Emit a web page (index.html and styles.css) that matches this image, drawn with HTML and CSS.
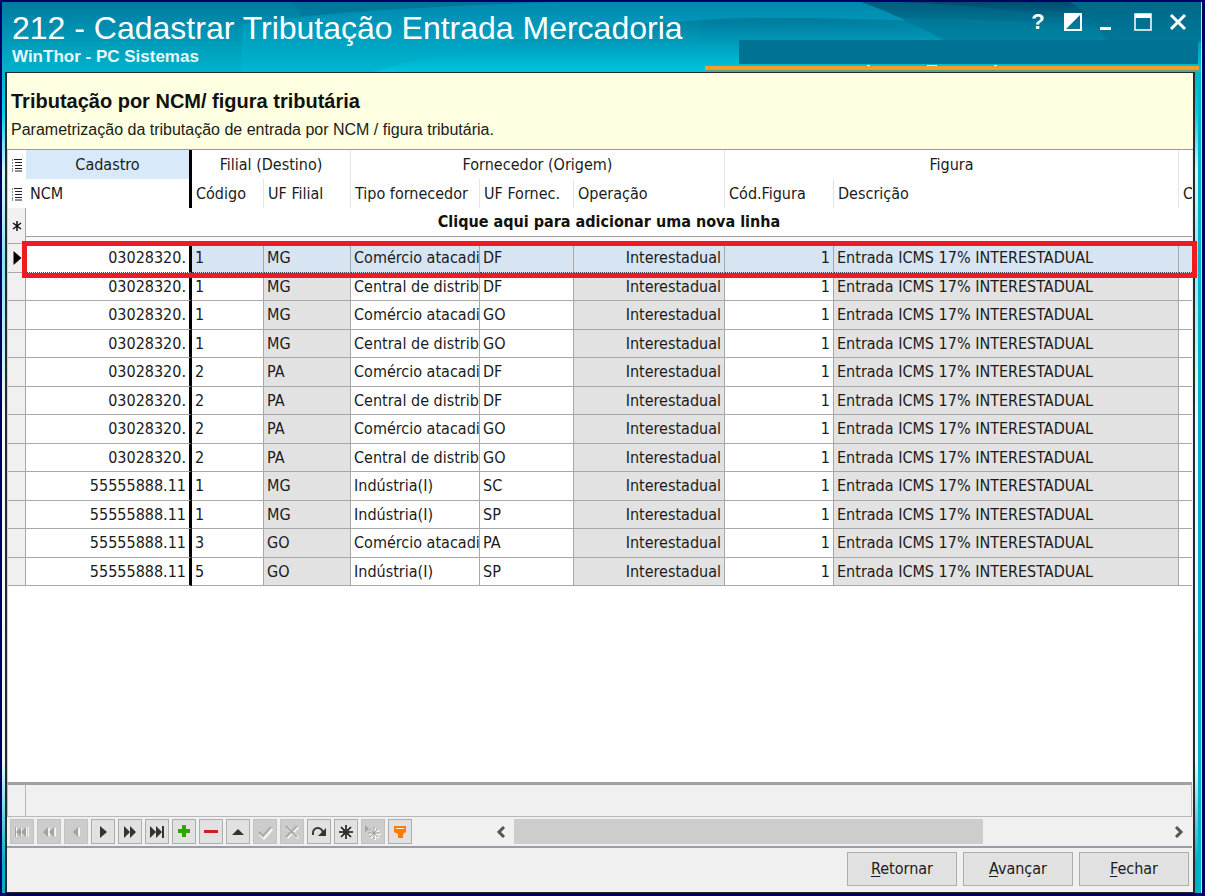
FILE: index.html
```html
<!DOCTYPE html>
<html lang="pt-BR">
<head>
<meta charset="utf-8">
<title>212 - Cadastrar Tributação Entrada Mercadoria</title>
<link rel="stylesheet" href="styles.css">
</head>
<body>
<main class="window">
  <header class="titlebar">
    <svg class="waves" viewBox="0 0 1200 70" preserveAspectRatio="none" aria-hidden="true">
      <defs>
        <linearGradient id="w1" x1="0" y1="0" x2="0" y2="1"><stop offset="0" stop-color="#007a9f"/><stop offset="1" stop-color="#00b3cc"/></linearGradient>
        <linearGradient id="w2" x1="0" y1="0" x2="0" y2="1"><stop offset="0" stop-color="#008fb5"/><stop offset="1" stop-color="#00b8d2"/></linearGradient>
        <linearGradient id="w3" x1="0" y1="0" x2="0" y2="1"><stop offset="0" stop-color="#007c9e"/><stop offset="1" stop-color="#00c4dd"/></linearGradient>
        <linearGradient id="w4" x1="0" y1="0" x2="0" y2="1"><stop offset="0" stop-color="#005d7c"/><stop offset="1" stop-color="#0088a8"/></linearGradient>
        <linearGradient id="w5" x1="0" y1="0" x2="0" y2="1"><stop offset="0" stop-color="#004c69"/><stop offset="1" stop-color="#007c9c"/></linearGradient>
        <linearGradient id="w6" x1="0" y1="0" x2="0" y2="1"><stop offset="0" stop-color="#007798"/><stop offset="1" stop-color="#0098bb"/></linearGradient>
      </defs>
      <rect width="1200" height="70" fill="url(#w1)"/>
      <path d="M240 22Q360 6 560 0H1200V70H240Z" fill="url(#w2)" opacity=".7"/>
      <path d="M290 0H560Q400 4 300 14Z" fill="#006b8d" opacity=".4"/>
      <path d="M370 70Q560 16 800 16Q960 18 1200 34V70Z" fill="url(#w3)"/>
      <path d="M790 16Q900 18 945 40H700V18Q740 15 790 16Z" fill="url(#w6)" opacity=".7"/>
      <path d="M860 0H1200V40H945Q905 16 860 0Z" fill="url(#w4)"/>
      <path d="M900 16Q1000 16 1100 26L1120 38H945Z" fill="#00809f" opacity=".5"/>
      <path d="M900 0H1070L1100 22Q1000 4 900 0Z" fill="url(#w5)"/>
      <path d="M1068 0H1200V40H1106Q1090 12 1068 0Z" fill="#00708f" opacity=".6"/>
    </svg>
    <div class="titles">
      <h1>212 - Cadastrar Tributação Entrada Mercadoria</h1>
      <p>WinThor - PC Sistemas</p>
    </div>
    <div class="title-side">
      <div class="controls">
        <button type="button" aria-label="Ajuda">?</button>
        <button type="button" aria-label="Alternar"><svg viewBox="0 0 18 18"><path d="M1 1h16v16H1z" fill="none" stroke="#fff" stroke-width="2"/><path d="M1 1h16L1 17z" fill="#fff"/></svg></button>
        <button type="button" aria-label="Minimizar"><svg viewBox="0 0 18 18"><path d="M1 14h11v3H1z" fill="#fff"/></svg></button>
        <button type="button" aria-label="Maximizar"><svg viewBox="0 0 18 18"><path d="M1 1h16v16H1z" fill="none" stroke="#fff" stroke-width="1.500"/><path d="M1 1h16v4H1z" fill="#fff"/></svg></button>
        <button type="button" aria-label="Fechar janela"><svg viewBox="0 0 18 18"><path d="M2 2l14 14M16 2L2 16" stroke="#fff" stroke-width="3"/></svg></button>
      </div>
      <div class="strip"></div>
      <div class="accent"><svg viewBox="0 0 494 2" preserveAspectRatio="none" aria-hidden="true"><path d="M162 0h3v1h-3zM222 0h10v1h-10zM289 0h3v1h-3z" fill="#e8f6f8"/></svg></div>
    </div>
  </header>

  <div class="client">
    <section class="intro">
      <h2>Tributação por NCM/ figura tributária</h2>
      <p>Parametrização da tributação de entrada por NCM / figura tributária.</p>
    </section>

    <section class="grid">
      <table>
        <colgroup><col class="c-ind"><col class="c-ncm"><col class="c-cod"><col class="c-uf"><col class="c-tipo"><col class="c-uff"><col class="c-op"><col class="c-fig"><col><col class="c-last"></colgroup>
        <thead>
          <tr class="bands">
            <th class="menu"><svg viewBox="0 0 10 14"><path d="M0 2h1M0 5h1M0 8h1M0 11h1M0 13h1" stroke="#222"/><path d="M2 1.500h8M3 4.500h7M3 7.500h7M3 10.500h7M3 13h7" stroke="#222"/></svg></th>
            <th class="hot frozen">Cadastro</th><th colspan="2">Filial (Destino)</th><th colspan="3">Fornecedor (Origem)</th><th colspan="2">Figura</th><th></th>
          </tr>
          <tr class="heads">
            <th class="menu"><svg viewBox="0 0 10 14"><path d="M0 2h1M0 5h1M0 8h1M0 11h1M0 13h1" stroke="#222"/><path d="M2 1.500h8M3 4.500h7M3 7.500h7M3 10.500h7M3 13h7" stroke="#222"/></svg></th>
            <th class="frozen">NCM</th><th>Código</th><th>UF Filial</th><th>Tipo fornecedor</th><th>UF Fornec.</th><th>Operação</th><th>Cód.Figura</th><th>Descrição</th><th>C</th>
          </tr>
        </thead>
        <tbody>
          <tr class="new"><th class="ind" rowspan="2"><svg viewBox="0 0 10 12"><path d="M5 1v10M1 3l8 6M9 3L1 9" stroke="#111" stroke-width="1.500"/></svg></th><td colspan="9">Clique aqui para adicionar uma nova linha</td></tr>
          <tr class="gap"><td colspan="9"></td></tr>
        </tbody>
        <tbody class="rows">
          <tr class="current"><th class="ind"><svg viewBox="0 0 8 14"><path d="M0 0l8 7-8 7z" fill="#000"/></svg></th><td class="num frozen">03028320.</td><td>1</td><td class="ro">MG</td><td>Comércio atacadi</td><td>DF</td><td class="ro num">Interestadual</td><td class="num">1</td><td class="ro">Entrada ICMS 17% INTERESTADUAL</td><td></td></tr>
          <tr><th class="ind"></th><td class="num frozen">03028320.</td><td>1</td><td class="ro">MG</td><td>Central de distrib</td><td>DF</td><td class="ro num">Interestadual</td><td class="num">1</td><td class="ro">Entrada ICMS 17% INTERESTADUAL</td><td></td></tr>
          <tr><th class="ind"></th><td class="num frozen">03028320.</td><td>1</td><td class="ro">MG</td><td>Comércio atacadi</td><td>GO</td><td class="ro num">Interestadual</td><td class="num">1</td><td class="ro">Entrada ICMS 17% INTERESTADUAL</td><td></td></tr>
          <tr><th class="ind"></th><td class="num frozen">03028320.</td><td>1</td><td class="ro">MG</td><td>Central de distrib</td><td>GO</td><td class="ro num">Interestadual</td><td class="num">1</td><td class="ro">Entrada ICMS 17% INTERESTADUAL</td><td></td></tr>
          <tr><th class="ind"></th><td class="num frozen">03028320.</td><td>2</td><td class="ro">PA</td><td>Comércio atacadi</td><td>DF</td><td class="ro num">Interestadual</td><td class="num">1</td><td class="ro">Entrada ICMS 17% INTERESTADUAL</td><td></td></tr>
          <tr><th class="ind"></th><td class="num frozen">03028320.</td><td>2</td><td class="ro">PA</td><td>Central de distrib</td><td>DF</td><td class="ro num">Interestadual</td><td class="num">1</td><td class="ro">Entrada ICMS 17% INTERESTADUAL</td><td></td></tr>
          <tr><th class="ind"></th><td class="num frozen">03028320.</td><td>2</td><td class="ro">PA</td><td>Comércio atacadi</td><td>GO</td><td class="ro num">Interestadual</td><td class="num">1</td><td class="ro">Entrada ICMS 17% INTERESTADUAL</td><td></td></tr>
          <tr><th class="ind"></th><td class="num frozen">03028320.</td><td>2</td><td class="ro">PA</td><td>Central de distrib</td><td>GO</td><td class="ro num">Interestadual</td><td class="num">1</td><td class="ro">Entrada ICMS 17% INTERESTADUAL</td><td></td></tr>
          <tr><th class="ind"></th><td class="num frozen">55555888.11</td><td>1</td><td class="ro">MG</td><td>Indústria(I)</td><td>SC</td><td class="ro num">Interestadual</td><td class="num">1</td><td class="ro">Entrada ICMS 17% INTERESTADUAL</td><td></td></tr>
          <tr><th class="ind"></th><td class="num frozen">55555888.11</td><td>1</td><td class="ro">MG</td><td>Indústria(I)</td><td>SP</td><td class="ro num">Interestadual</td><td class="num">1</td><td class="ro">Entrada ICMS 17% INTERESTADUAL</td><td></td></tr>
          <tr><th class="ind"></th><td class="num frozen">55555888.11</td><td>3</td><td class="ro">GO</td><td>Comércio atacadi</td><td>PA</td><td class="ro num">Interestadual</td><td class="num">1</td><td class="ro">Entrada ICMS 17% INTERESTADUAL</td><td></td></tr>
          <tr><th class="ind"></th><td class="num frozen">55555888.11</td><td>5</td><td class="ro">GO</td><td>Indústria(I)</td><td>SP</td><td class="ro num">Interestadual</td><td class="num">1</td><td class="ro">Entrada ICMS 17% INTERESTADUAL</td><td></td></tr>
        </tbody>
      </table>
      <div class="highlight"></div>
    </section>

    <div class="summary"><div class="summary-ind"></div></div>

    <div class="navbar">
      <div class="nav">
        <button type="button" disabled aria-label="Primeiro"><svg viewBox="0 0 20 20"><g class="shade"><path d="M4 5h1v10H4zM10 5v10l-5-5zM15 5v10l-5-5zM17 5v10h-1V5z"/></g><path d="M3 5h1v10H3zM9 5v10l-5-5zM14 5v10l-5-5z"/></svg></button>
        <button type="button" disabled aria-label="Página anterior"><svg viewBox="0 0 20 20"><g class="shade"><path d="M11 5v10l-5-5zM17 5v10l-5-5z"/></g><path d="M9 5v10l-5-5zM15 5v10l-5-5z"/></svg></button>
        <button type="button" disabled aria-label="Anterior"><svg viewBox="0 0 20 20"><g class="shade"><path d="M14 5v10l-5-5z"/></g><path d="M12 5v10l-5-5z"/></svg></button>
        <button type="button" aria-label="Próximo"><svg viewBox="0 0 20 20"><path d="M7 4v12l7-6z"/></svg></button>
        <button type="button" aria-label="Próxima página"><svg viewBox="0 0 20 20"><path d="M4 4v12l6-6zM10 4v12l6-6z"/></svg></button>
        <button type="button" aria-label="Último"><svg viewBox="0 0 20 20"><path d="M3 4v12l6-6zM9 4v12l6-6zM15 4h2v12h-2z"/></svg></button>
        <button type="button" aria-label="Inserir"><svg viewBox="0 0 20 20"><path d="M8 3h4v4h4v4h-4v4H8v-4H4V7h4z" fill="#2ba800"/></svg></button>
        <button type="button" aria-label="Excluir"><svg viewBox="0 0 20 20"><path d="M3 8h14v3H3z" fill="#cc2020"/></svg></button>
        <button type="button" aria-label="Editar"><svg viewBox="0 0 20 20"><path d="M4 13h12l-6-6z"/></svg></button>
        <button type="button" disabled aria-label="Gravar"><svg viewBox="0 0 20 20"><path class="light" d="M5 12l4 4 8-9"/><path class="dim" d="M4 10l4 4 8-9"/></svg></button>
        <button type="button" disabled aria-label="Cancelar"><svg viewBox="0 0 20 20"><path class="light" d="M5 5l11 11M16 5L5 16"/><path class="dim" d="M4 4l11 11M15 4L4 15"/></svg></button>
        <button type="button" aria-label="Atualizar"><svg viewBox="0 0 20 20"><path d="M4 13V10Q5 6 9 6Q12 6 14 10" fill="none" stroke="#3c3c3c" stroke-width="2"/><path d="M17 6v8H9z"/></svg></button>
        <button type="button" aria-label="Marcar"><svg viewBox="0 0 20 20"><path d="M10 3v14M3 10h14M5 5l10 10M15 5L5 15" stroke="#111" stroke-width="1.500"/><circle cx="10" cy="10" r="3"/></svg></button>
        <button type="button" disabled aria-label="Ir para marca"><svg viewBox="0 0 20 20"><path d="M2 3v7l4-3z"/><path d="M12 6v12M6 12h12M8 8l8 8M16 8l-8 8" stroke="#f4f4f4" stroke-width="2"/><path d="M11 5v12M5 11h12M7 7l8 8M15 7l-8 8" stroke="#999"/></svg></button>
        <button type="button" aria-label="Filtrar"><svg viewBox="0 0 20 20"><path d="M4 4h12v6l-3 2v4H8v-4l-4-2z" fill="#ff7b00"/><path d="M6 6h8v1H6z" fill="#fff3dc"/></svg></button>
      </div>
      <div class="scroll">
        <button type="button" aria-label="Rolar à esquerda"><svg viewBox="0 0 10 12"><path d="M8 1L3 6l5 5" fill="none" stroke="#555" stroke-width="3"/></svg></button>
        <div class="track"><div class="thumb"></div></div>
        <button type="button" aria-label="Rolar à direita"><svg viewBox="0 0 10 12"><path d="M2 1l5 5-5 5" fill="none" stroke="#555" stroke-width="3"/></svg></button>
      </div>
    </div>

    <footer class="actions">
      <button type="button"><u>R</u>etornar</button>
      <button type="button"><u>A</u>vançar</button>
      <button type="button"><u>F</u>echar</button>
    </footer>
  </div>
</main>
</body>
</html>
```

FILE: styles.css
```css
* { box-sizing: border-box; }

body {
  margin: 0;
  height: 100vh;
  padding: 2px 3px 3px 2px;
  background: #000062;
  color: #1b1b1b;
  font: 16px/20px "DejaVu Sans Condensed", "DejaVu Sans", sans-serif;
  font-stretch: condensed;
}

button { margin: 0; padding: 0; font: inherit; color: inherit; border-radius: 0; }
svg { display: block; }
h1, h2, p { margin: 0; }

.window {
  display: flex;
  flex-direction: column;
  height: 100%;
  padding: 0 6px 0 3px;
  background:
    linear-gradient(#00b4cc, #00b4cc) right / 3px 100% no-repeat,
    linear-gradient(#007a9f, #00b4cc 70px, #00d0e4 110px, #d8f8fa 170px, #8be6f0 260px, #f0fcfd 420px, #e8fafc 760px, #00b0c8 860px);
  border-right: 1px solid #c9dbe6;
}

.titlebar {
  position: relative;
  display: flex;
  justify-content: space-between;
  height: 70px;
  margin: 0 -6px 0 -3px;
  color: #fff;
  font-family: "Liberation Sans", Arial, sans-serif;
}
.waves { position: absolute; width: 100%; height: 100%; }
.titles { position: relative; padding: 8px 0 0 10px; white-space: nowrap; }
.titles h1 { font-size: 32px; line-height: 36px; font-weight: 400; }
.titles p { margin-top: 1px; font-size: 17px; line-height: 20px; font-weight: 700; color: #e6f7fb; }

.title-side { position: relative; display: flex; flex-direction: column; width: 494px; margin-right: 2px; }
.controls { display: flex; justify-content: flex-end; gap: 17px; height: 38px; padding: 11px 12px 0 0; }
.controls button { width: 18px; height: 18px; border: 0; background: none; color: #fff; font-size: 22px; line-height: 18px; font-weight: 700; }
.strip { height: 24px; margin: 0 1px 0 34px; background: #007394; }
.accent { height: 6px; margin-top: 1px; background: #f29f24; border-top: 1px solid #5f9f8a; border-bottom: 1px solid #5f9f8a; }
.accent svg { width: 100%; height: 2px; margin-top: -1px; }

.client {
  display: flex;
  flex-direction: column;
  flex: 1;
  min-height: 0;
  background: #f0f0f0;
  border: solid #25282c;
  border-width: 1px 2px 1px 2px;
}

.intro { height: 77px; padding: 16px 4px 0; background: #ffffe1; border-bottom: 1px solid #9a9aa2; font-family: "Liberation Sans", Arial, sans-serif; }
.intro h2 { font-size: 20px; line-height: 24px; color: #111; }
.intro p { margin-top: 7px; font-size: 16px; line-height: 20px; }

.grid { position: relative; flex: 1; min-height: 0; margin-right: 1px; background: #fff; border-left: 1px solid #d0d0d0; }
table { width: 100%; table-layout: fixed; border-collapse: separate; border-spacing: 0; }
th, td { padding: 0 3px; overflow: hidden; white-space: nowrap; font-weight: 400; text-align: left; line-height: 20px; }
.c-ind { width: 18px; }
.c-ncm { width: 166px; }
.c-cod { width: 72px; }
.c-uf { width: 87px; }
.c-tipo { width: 129px; }
.c-uff { width: 94px; }
.c-op { width: 151px; }
.c-fig { width: 109px; }
.c-last { width: 13px; }

thead tr { height: 29px; }
thead th { padding: 0 0 0 4px; border-right: 1px solid #e4e4e4; }
.bands th { padding: 0; text-align: center; }
.bands .hot { background: #d8eaf9; }
thead .menu { padding: 0 3px 0 4px; border: 0; }
.menu svg { width: 10px; height: 14px; }
thead .frozen, .rows td.frozen { border-right: 3px solid #000; }
thead th:last-child { border-right: 0; }

.new { height: 29px; }
.new td { border-bottom: 1px solid #a0a0a0; font-weight: 700; text-align: center; color: #111; }
.gap { height: 7px; }
.gap td { background: #f8f8f8; padding: 0; }
.ind { background: #f0f0f0; border-right: 1px solid #a8a8a8; border-bottom: 1px solid #a8a8a8; }
.new .ind { padding: 0 3px 0 4px; }
.ind svg { width: 10px; height: 12px; }
.current .ind { padding: 0 1px 0 5px; }
.current .ind svg { width: 9px; height: 14px; }

.rows tr { height: 28px; }
.rows tr:nth-child(odd) { height: 29px; }
.rows td { border-right: 1px solid #a8a8a8; border-bottom: 1px solid #a8a8a8; }
.rows td:last-child { border-right: 0; }
.rows .num { text-align: right; }
.rows .frozen { padding-right: 3px; }
.rows .ro { background: #e2e2e2; }
.rows .current td { background: #d7e4f2; border-bottom: 1px dotted #444; }
.rows .current .frozen { background: #fff; border-left: 1px dotted #444; }

.highlight { position: absolute; top: 91px; left: 14px; right: -5px; height: 37px; border: 5px solid #ed1c24; }

.summary { display: flex; height: 35px; margin-right: 1px; border: solid #b8b8b8; border-width: 3px 1px 1px; border-top-color: #a0a0a0; }
.summary-ind { width: 18px; border-right: 1px solid #b8b8b8; }

.navbar { display: flex; gap: 76px; height: 31px; margin-right: 1px; padding: 2px 0 3px 3px; border-bottom: 2px solid #989ea6; }
.nav { display: flex; gap: 3px; }
.nav button { width: 24px; height: 25px; padding: 1px; background: #e1e1e1; border: 1px solid #adadad; }
.nav button:disabled { background: #cccccc; border-color: #c2c2c2; }
.nav svg { width: 20px; height: 20px; fill: #333; }
.nav button:disabled svg { fill: #a2a2a2; }
.nav .shade { fill: #f4f4f4; }
.nav .light { fill: none; stroke: #f4f4f4; stroke-width: 3px; }
.nav .dim { fill: none; stroke: #aaa; stroke-width: 2px; }

.scroll { display: flex; flex: 1; height: 25px; }
.scroll button { display: flex; align-items: center; justify-content: center; width: 26px; border: 0; background: none; }
.scroll svg { width: 10px; height: 12px; }
.track { flex: 1; }
.thumb { width: 72%; height: 100%; background: #cdcdcd; }

.actions { display: flex; justify-content: flex-end; gap: 6px; height: 44px; padding: 4px 4px 6px; }
.actions button { width: 110px; height: 34px; background: #e1e1e1; border: 1px solid #adadad; }
.actions u { text-underline-offset: 2px; }
```
